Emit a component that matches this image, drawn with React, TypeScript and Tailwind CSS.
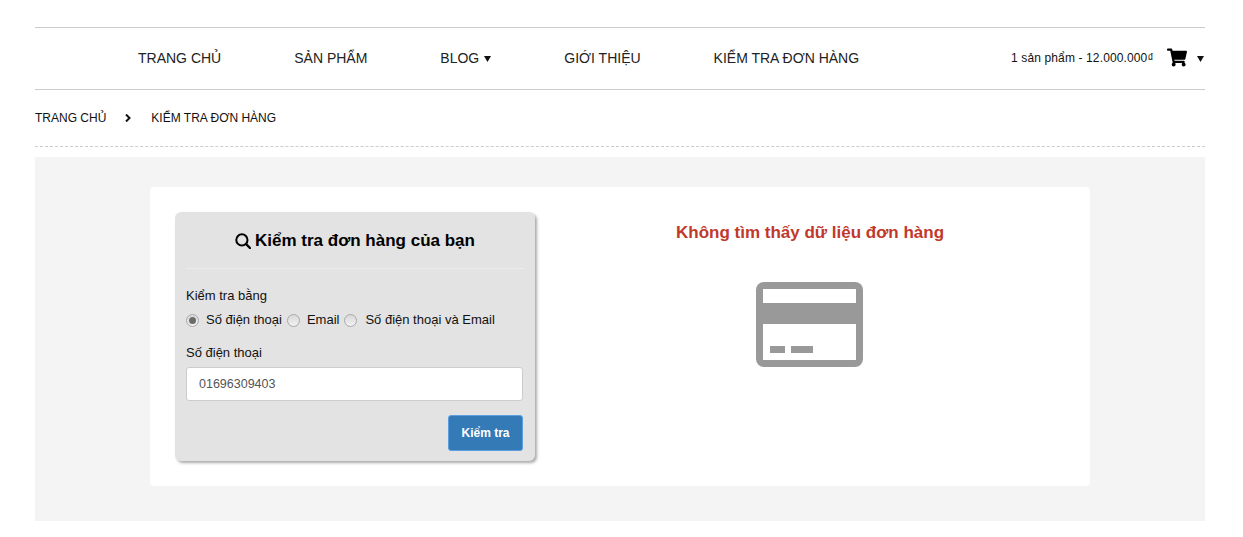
import { FaShoppingCart } from "react-icons/fa";

const navItems = ["TRANG CHỦ", "SẢN PHẨM", "BLOG", "GIỚI THIỆU", "KIỂM TRA ĐƠN HÀNG"];

function Caret({ className }: { className: string }) {
  return (
    <svg viewBox="0 0 7 6" className={className} fill="currentColor">
      <path d="M0 0h7L3.5 6z" />
    </svg>
  );
}

function SearchIcon() {
  return (
    <svg viewBox="0 0 16 16" className="h-[16px] w-[16px]" fill="none" stroke="#000000">
      <circle cx="6.9" cy="6.9" r="5.6" strokeWidth="2" />
      <path d="M11 11 15 15" strokeWidth="2.4" strokeLinecap="round" />
    </svg>
  );
}

function Radio({ checked }: { checked?: boolean }) {
  return (
    <span className="flex h-[13px] w-[13px] shrink-0 items-center justify-center rounded-full border border-[#a9a9a9] bg-[linear-gradient(#d8d8d8,#f2f2f2)]">
      {checked && <span className="h-[7px] w-[7px] rounded-full bg-[#6b6b6b]" />}
    </span>
  );
}

function CardIcon() {
  return (
    <svg viewBox="0 0 107 85" className="h-[85px] w-[107px]">
      <rect width="107" height="85" rx="8" fill="#999999" />
      <rect x="7" y="7" width="93" height="14" fill="#ffffff" />
      <rect x="7" y="42" width="93" height="36" fill="#ffffff" />
      <rect x="14" y="64" width="15" height="7" fill="#999999" />
      <rect x="35" y="64" width="22" height="7" fill="#999999" />
    </svg>
  );
}

export default function App() {
  return (
    <div className="min-h-[537px] bg-white pl-[35px] pr-[38px] pt-[27px] font-['Liberation_Sans',Arial,sans-serif] text-[#111111]">
      <header className="flex h-[63px] items-center border-y border-[#cccccc] pb-[2px] pl-[103px]">
        <nav className="flex gap-[73px] text-sm text-[#222222]">
          {navItems.map((item) => (
            <a key={item} className="flex items-center gap-[5px]">
              {item}
              {item === "BLOG" && <Caret className="mt-[2px] h-[6px] w-[7px] text-[#111111]" />}
            </a>
          ))}
        </nav>
        <div className="ml-auto flex items-center">
          <span className="mt-px w-[142px] overflow-hidden whitespace-nowrap text-xs tracking-[0.13px]">1 sản phẩm - 12.000.000₫</span>
          <FaShoppingCart className="ml-[14px] h-[19px] w-[20px] text-black" />
          <Caret className="ml-[10px] mr-px mt-[2px] h-[6px] w-[7px] text-[#111111]" />
        </div>
      </header>

      <div className="flex h-[57px] items-center border-b border-dashed border-[#cccccc] text-xs">
        <span>TRANG CHỦ</span>
        <svg viewBox="0 0 6 8" className="ml-[19px] mr-[20px] h-[8px] w-[6px]" fill="none" stroke="#111111" strokeWidth="2">
          <path d="M1 .5 4.5 4 1 7.5" />
        </svg>
        <span>KIỂM TRA ĐƠN HÀNG</span>
      </div>

      <main className="mt-[10px] h-[364px] bg-[#f4f4f4] px-[115px] pt-[30px]">
        <div className="flex h-[299px] rounded-[4px] bg-white pl-[25px] pt-[25px]">
          <section className="h-[249px] w-[360px] rounded-[6px] bg-[#e3e3e3] px-[11px] shadow-[2px_2px_3px_#aaaaaa]">
            <h2 className="flex h-[57px] items-center justify-center gap-[4px] border-b border-[#ececec] pt-[2px] text-[17px] font-bold text-black">
              <SearchIcon />
              Kiểm tra đơn hàng của bạn
            </h2>
            <p className="mt-[19px] text-[13px] leading-[16px]">Kiểm tra bằng</p>
            <div className="mt-[8px] flex h-[16px] items-center text-[13px]">
              <Radio checked />
              <span className="ml-[7px]">Số điện thoại</span>
              <span className="ml-[5px]"><Radio /></span>
              <span className="ml-[7px]">Email</span>
              <span className="ml-[5px]"><Radio /></span>
              <span className="ml-[8px]">Số điện thoại và Email</span>
            </div>
            <label className="mt-[17px] block text-[13px] leading-[16px]">Số điện thoại</label>
            <input
              readOnly
              value="01696309403"
              className="mt-[6px] block h-[34px] w-[337px] rounded-[3px] border border-[#cccccc] bg-white px-[12px] text-[12.5px] text-[#555555]"
            />
            <div className="mt-[14px] flex w-[337px] justify-end">
              <button className="h-[36px] w-[75px] rounded-[3px] border border-[#5c9ee0] bg-[#337ab7] text-xs font-bold text-white">
                Kiểm tra
              </button>
            </div>
          </section>
          <section className="flex flex-1 flex-col items-center pr-[5px]">
            <h3 className="mt-[10px] text-[17px] font-bold leading-[22px] text-[#c0392b]">Không tìm thấy dữ liệu đơn hàng</h3>
            <div className="mr-[2px] mt-[38px]">
              <CardIcon />
            </div>
          </section>
        </div>
      </main>
    </div>
  );
}
